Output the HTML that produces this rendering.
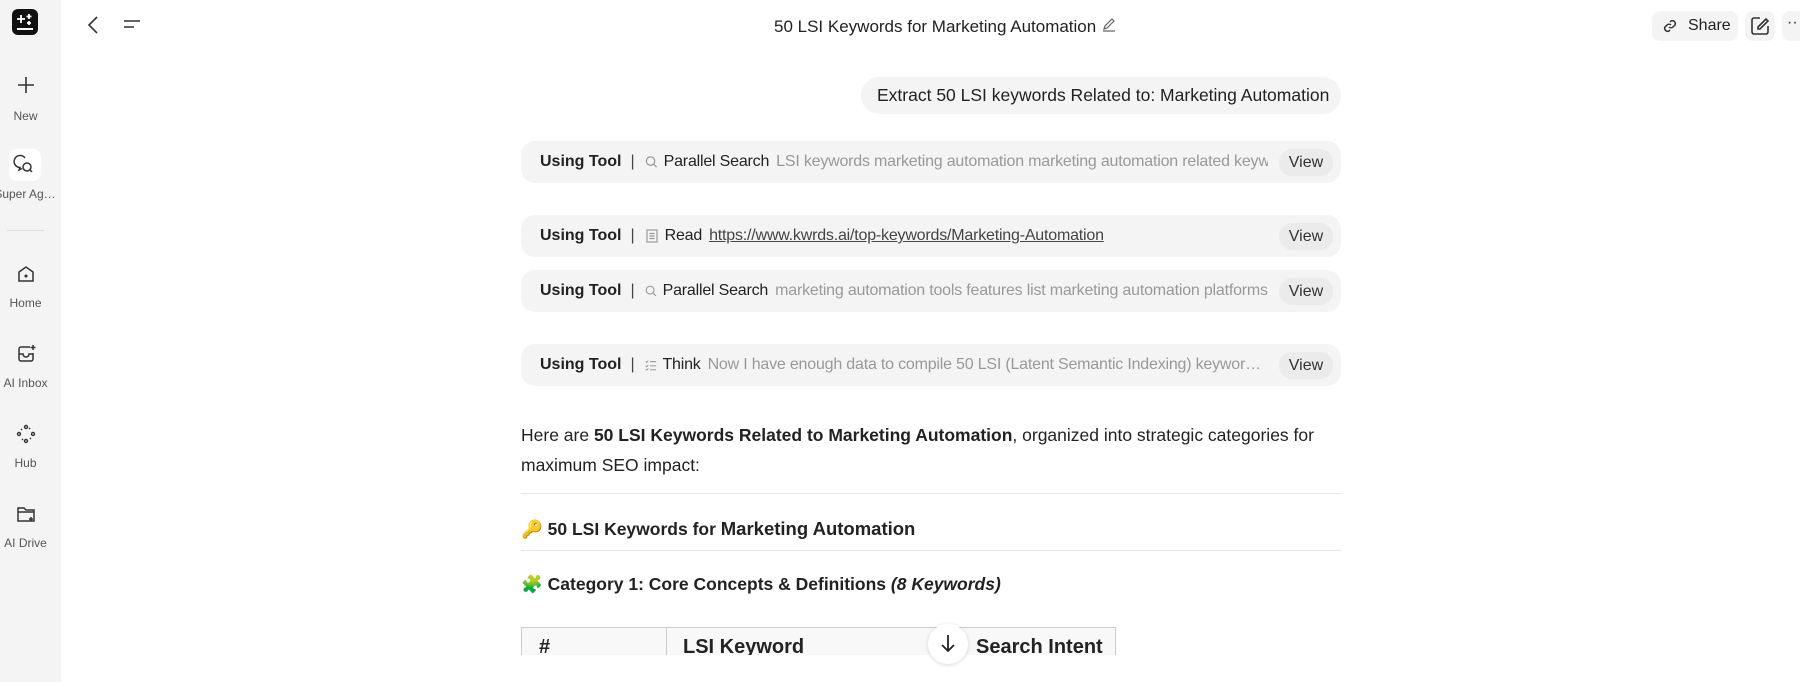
<!DOCTYPE html>
<html><head><meta charset="utf-8"><style>
*{box-sizing:border-box;margin:0;padding:0}
body{width:1800px;height:682px;overflow:hidden;background:#fff;font-family:"Liberation Sans",sans-serif;color:#222;position:relative}
.side{position:absolute;left:0;top:0;width:61px;height:682px;background:#f4f4f4}
.it{position:absolute;left:0;width:51px;text-align:center;font-size:12px;color:#555;white-space:nowrap}
.ic{position:absolute;left:50%;transform:translateX(-50%)}
.abs{position:absolute}
.row{position:absolute;left:521px;width:820px;height:42px;background:#f4f4f4;border-radius:14px;font-size:16px;display:flex;align-items:center;padding-left:19px;padding-right:73px;white-space:nowrap;overflow:hidden}
.row b{font-weight:bold;color:#222}
.row .sep{margin:0 9px;color:#444}
.row .nm{margin:0 7px 0 5px;color:#222;letter-spacing:-.2px}
.row .ds{color:#999;overflow:hidden;flex:1 1 auto;min-width:0;letter-spacing:-.2px}
.view{position:absolute;right:8px;top:8px;width:54px;height:27px;border-radius:13px;background:#ebebeb;font-size:16px;text-align:center;line-height:27px;color:#333}
.p{position:absolute;left:521px;font-size:17.5px;color:#222}
.hr{position:absolute;left:521px;width:820px;height:1px;background:#e6e6e6}
</style></head><body>
<div class="side">
<div class="abs" style="left:12px;top:9px;width:26px;height:26px;background:#111;border-radius:6px">
<svg width="26" height="26" viewBox="0 0 26 26"><path d="M9 6v8M5 10h8M17 5v5M14.5 7.5h5M17 12v4M15 14h4" stroke="#fff" stroke-width="1.8"/><rect x="5" y="19" width="16" height="2" fill="#fff"/></svg></div>
<div class="it" style="top:75px"><svg width="20" height="20" viewBox="0 0 20 20"><path d="M10 2v16M2 10h16" stroke="#333" stroke-width="1.6"/></svg><div style="margin-top:11px">New</div></div>
<div class="abs" style="left:9px;top:149px;width:32px;height:32px;background:#fff;border-radius:8px"><svg width="32" height="32" viewBox="0 0 32 32" fill="none" stroke="#333" stroke-width="1.5"><path d="M16 9a6 6 0 1 0-5 9.5l-1 2.5 3-1.5"/><circle cx="18" cy="18" r="4"/><path d="M21 21l2 2"/></svg></div>
<div class="it" style="top:187px;left:-10px;width:70px">Super Ag…</div>
<div class="abs" style="left:7px;top:230px;width:37px;height:1px;background:#ddd"></div>
<div class="it" style="top:263px"><svg width="22" height="22" viewBox="0 0 22 22" fill="none" stroke="#333" stroke-width="1.5"><path d="M4 9l7-5 7 5v9H4z"/><circle cx="11" cy="13" r=".8" fill="#333"/></svg><div style="margin-top:8px">Home</div></div>
<div class="it" style="top:343px"><svg width="22" height="22" viewBox="0 0 22 22" fill="none" stroke="#333" stroke-width="1.5"><path d="M15 4H6a2 2 0 0 0-2 2v10a2 2 0 0 0 2 2h10a2 2 0 0 0 2-2v-6"/><path d="M4 11h4a3 3 0 0 0 6 0h4"/><path d="M18 2v5M15.5 4.5h5"/></svg><div style="margin-top:8px">AI Inbox</div></div>
<div class="it" style="top:423px"><svg width="22" height="22" viewBox="0 0 22 22" fill="none" stroke="#333" stroke-width="1.4"><circle cx="11" cy="4" r="1.5"/><circle cx="11" cy="18" r="1.5"/><circle cx="4" cy="11" r="1.5"/><circle cx="18" cy="11" r="1.5"/><path d="M6 7l2-2M14 5l2 2M16 15l-2 2M8 17l-2-2" stroke-dasharray="1.5 1.5"/></svg><div style="margin-top:8px">Hub</div></div>
<div class="it" style="top:503px"><svg width="22" height="22" viewBox="0 0 22 22" fill="none" stroke="#333" stroke-width="1.5"><path d="M3 5h6l2 2h8v11H3z"/><path d="M3 9h16"/><path d="M16 14v4M14 16h4"/></svg><div style="margin-top:8px">AI Drive</div></div>
</div>
<svg class="abs" style="left:84px;top:15px" width="20" height="20" viewBox="0 0 20 20"><path d="M13 2L5 10l8 8" stroke="#333" stroke-width="1.6" fill="none"/></svg>
<svg class="abs" style="left:122px;top:17px" width="20" height="16" viewBox="0 0 20 16"><path d="M2 4h16M2 10h10" stroke="#333" stroke-width="1.6"/></svg>
<div class="abs" style="left:774px;top:16px;font-size:17px;color:#222">50 LSI Keywords for Marketing Automation <svg width="16" height="16" viewBox="0 0 16 16" fill="none" stroke="#666" stroke-width="1.2"><path d="M3 13l1-3 7-7 2 2-7 7zM2 15h12"/></svg></div>
<div class="abs" style="left:1652px;top:11px;width:86px;height:30px;background:#f4f4f4;border-radius:8px;font-size:16px;line-height:30px;padding-left:36px;color:#222">Share</div>
<svg class="abs" style="left:1662px;top:18px" width="16" height="16" viewBox="0 0 16 16" fill="none" stroke="#333" stroke-width="1.5"><path d="M7 9a3 3 0 0 0 4 0l2-2a3 3 0 0 0-4-4l-1 1M9 7a3 3 0 0 0-4 0L3 9a3 3 0 0 0 4 4l1-1"/></svg>
<div class="abs" style="left:1745px;top:11px;width:30px;height:30px;background:#f4f4f4;border-radius:8px"><svg width="30" height="30" viewBox="0 0 30 30" fill="none" stroke="#333" stroke-width="1.6"><path d="M15 7H9a2 2 0 0 0-2 2v12a2 2 0 0 0 2 2h12a2 2 0 0 0 2-2v-6"/><path d="M21 8l2 2-8 8h-2v-2z"/></svg></div>
<div class="abs" style="left:1782px;top:11px;width:30px;height:30px;background:#f4f4f4;border-radius:8px;font-size:16px;line-height:24px;padding-left:5px;color:#333">··</div>
<div class="abs" style="left:861px;top:77px;width:480px;height:37px;background:#f4f4f4;border-radius:18px;font-size:17.5px;line-height:37px;padding-left:16px;color:#222">Extract 50 LSI keywords Related to: Marketing Automation</div>
<div class="row" style="top:141px"><b>Using Tool</b><span class="sep">|</span><svg width="16" height="16" viewBox="0 0 16 16" fill="none" stroke="#999" stroke-width="1.3"><circle cx="7" cy="7" r="4.5"/><path d="M10.5 10.5l3 3"/></svg><span class="nm">Parallel Search</span><span class="ds">LSI keywords marketing automation marketing automation related keywords</span><div class="view">View</div></div>
<div class="row" style="top:215px"><b>Using Tool</b><span class="sep">|</span><svg width="16" height="16" viewBox="0 0 16 16" fill="none" stroke="#999" stroke-width="1.2"><rect x="3" y="2" width="10" height="12"/><path d="M5.5 5.5h5M5.5 8h5M5.5 10.5h5"/></svg><span class="nm">Read</span><span style="color:#444;text-decoration:underline;letter-spacing:-.2px">https://www.kwrds.ai/top-keywords/Marketing-Automation</span><div class="view">View</div></div>
<div class="row" style="top:270px"><b>Using Tool</b><span class="sep">|</span><svg width="16" height="16" viewBox="0 0 16 16" fill="none" stroke="#999" stroke-width="1.3"><circle cx="7" cy="7" r="4.5"/><path d="M10.5 10.5l3 3"/></svg><span class="nm">Parallel Search</span><span class="ds">marketing automation tools features list marketing automation platforms examples</span><div class="view">View</div></div>
<div class="row" style="top:344px"><b>Using Tool</b><span class="sep">|</span><svg width="16" height="16" viewBox="0 0 16 16" fill="none" stroke="#999" stroke-width="1.2"><path d="M2 4l1 1 2-2M2 9l1 1 2-2M2 13l1 1 2-2M7 4h7M7 9h7M7 13.5h7"/></svg><span class="nm">Think</span><span class="ds" style="text-overflow:ellipsis">Now I have enough data to compile 50 LSI (Latent Semantic Indexing) keywords for marketing</span><div class="view">View</div></div>
<div class="p" style="top:420px;line-height:30px;width:820px">Here are <b>50 LSI Keywords Related to Marketing Automation</b>, organized into strategic categories for maximum SEO impact:</div>
<div class="hr" style="top:493px"></div>
<div class="p" style="top:518px;font-weight:bold">🔑 50 LSI Keywords for <span style="font-size:18.5px">Marketing Automation</span></div>
<div class="hr" style="top:550px"></div>
<div class="p" style="top:574px;font-weight:bold">🧩 Category 1: Core Concepts &amp; Definitions <i>(8 Keywords)</i></div>
<div class="abs" style="left:521px;top:627px;width:595px;height:28px;border:1px solid #ccc;border-bottom:none;background:#f8f8f8;overflow:hidden;font-weight:bold;font-size:20px">
<div class="abs" style="left:144px;top:0;width:1px;height:30px;background:#ccc"></div>
<div class="abs" style="left:17px;top:8px">#</div><div class="abs" style="left:161px;top:8px">LSI Keyword</div><div class="abs" style="left:454px;top:8px">Search Intent</div></div>
<div class="abs" style="left:928px;top:624px;width:40px;height:40px;border-radius:20px;background:#fff;box-shadow:0 1px 5px rgba(0,0,0,.15)"><svg width="40" height="40" viewBox="0 0 40 40" fill="none" stroke="#222" stroke-width="1.8"><path d="M20 11v16M14 21l6 6 6-6"/></svg></div>
</body></html>
